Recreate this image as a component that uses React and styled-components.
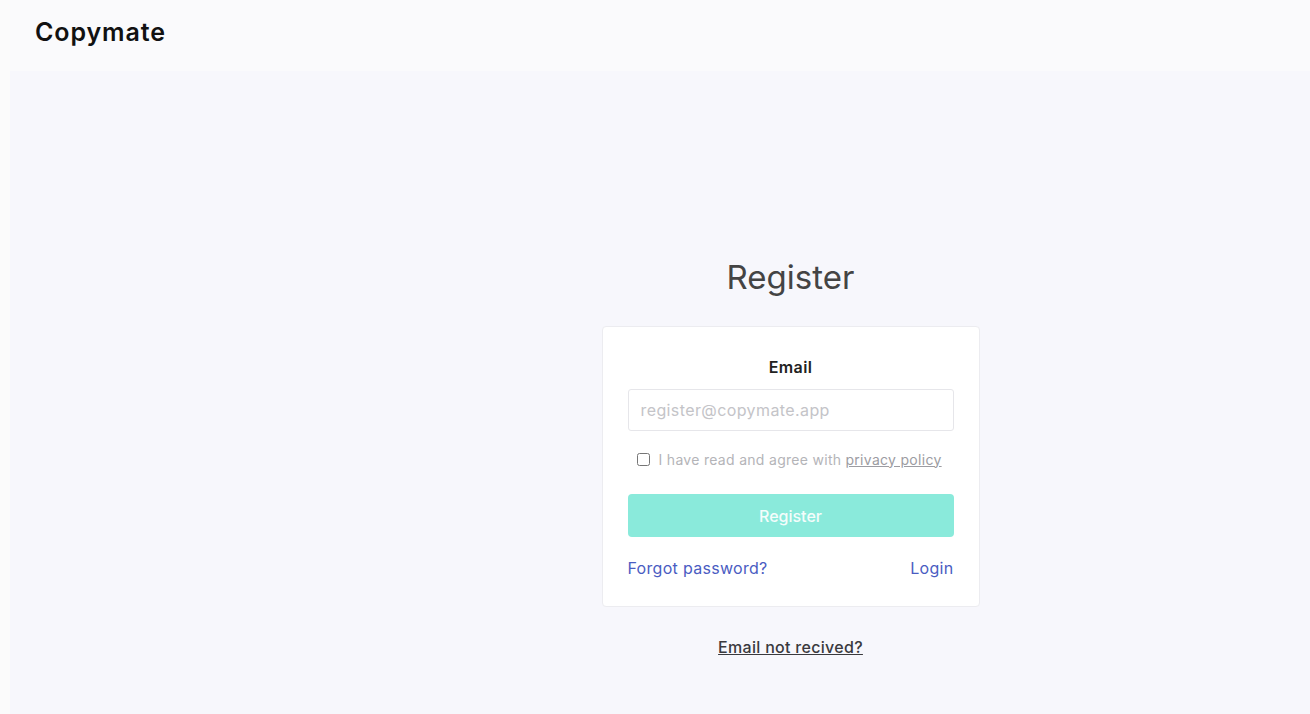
import React from "react";
import styled, { createGlobalStyle } from "styled-components";

const Global = createGlobalStyle`
  html, body { margin: 0; padding: 0; }
  body {
    background: #fbfbfb;
    font-family: Inter, "Noto Sans", Arial, sans-serif;
    -webkit-font-smoothing: antialiased;
  }
  * { box-sizing: border-box; }
`;

const Page = styled.div`
  margin-left: 10px;
  min-height: 714px;
  display: flex;
  flex-direction: column;
  background: #f7f7fc;
`;

const Header = styled.header`
  height: 71px;
  display: flex;
  align-items: center;
  padding: 0 0 8px 25px;
  background: #fafafc;
`;

const Logo = styled.div`
  font-size: 25px;
  font-weight: 600;
  color: #111;
  letter-spacing: 0.9px;
`;

const Main = styled.main`
  flex: 1;
  display: flex;
  flex-direction: column;
  align-items: center;
  padding-top: 187px;
  padding-left: 261px;
`;

const Title = styled.h1`
  margin: 0;
  font-size: 33px;
  line-height: 38px;
  font-weight: 400;
  color: #444;
`;

const Card = styled.div`
  margin-top: 30px;
  width: 378px;
  background: #fff;
  border: 1px solid #ececf0;
  border-radius: 4px;
  padding: 30px 25px 28px;
  display: flex;
  flex-direction: column;
`;

const Label = styled.label`
  text-align: center;
  font-size: 16px;
  line-height: 20px;
  font-weight: 600;
  letter-spacing: 0.4px;
  color: #222;
`;

const Input = styled.input`
  margin-top: 12px;
  height: 42px;
  width: 100%;
  border: 1px solid #e6e6ea;
  border-radius: 3px;
  padding: 0 12px;
  font-family: inherit;
  font-size: 16px;
  letter-spacing: 0.4px;
  color: #333;
  outline: none;
  &::placeholder { color: #c4c4c8; }
`;

const CheckRow = styled.div`
  margin-top: 18px;
  display: flex;
  align-items: center;
  padding-left: 9px;
  height: 20px;
  font-size: 14px;
  letter-spacing: 0.3px;
  color: #b4b4b8;
  white-space: nowrap;
`;

const Check = styled.input`
  margin: 0 9px 0 0;
  width: 13px;
  height: 13px;
`;

const Policy = styled.a`
  color: #9c9ca2;
  text-decoration: underline;
  margin-left: 4px;
`;

const Button = styled.button`
  margin-top: 25px;
  height: 43px;
  width: 100%;
  border: none;
  border-radius: 4px;
  background: #8aeadb;
  color: #f4fdfb;
  font-family: inherit;
  font-size: 16px;
  font-weight: 500;
`;

const Links = styled.div`
  margin-top: 21px;
  display: flex;
  justify-content: space-between;
  line-height: 20px;
`;

const Link = styled.a`
  color: #4a5cc2;
  font-size: 16px;
  letter-spacing: 0.3px;
  text-decoration: none;
`;

const Footer = styled.a`
  margin-top: 30px;
  font-size: 16px;
  line-height: 20px;
  font-weight: 500;
  letter-spacing: 0.3px;
  color: #3a3a3e;
  text-decoration: underline;
`;

export default function App() {
  return (
    <>
      <Global />
      <Page>
        <Header>
          <Logo>Copymate</Logo>
        </Header>
        <Main>
          <Title>Register</Title>
          <Card>
            <Label>Email</Label>
            <Input placeholder="register@copymate.app" />
            <CheckRow>
              <Check type="checkbox" />
              I have read and agree with <Policy>privacy policy</Policy>
            </CheckRow>
            <Button>Register</Button>
            <Links>
              <Link>Forgot password?</Link>
              <Link>Login</Link>
            </Links>
          </Card>
          <Footer>Email not recived?</Footer>
        </Main>
      </Page>
    </>
  );
}
